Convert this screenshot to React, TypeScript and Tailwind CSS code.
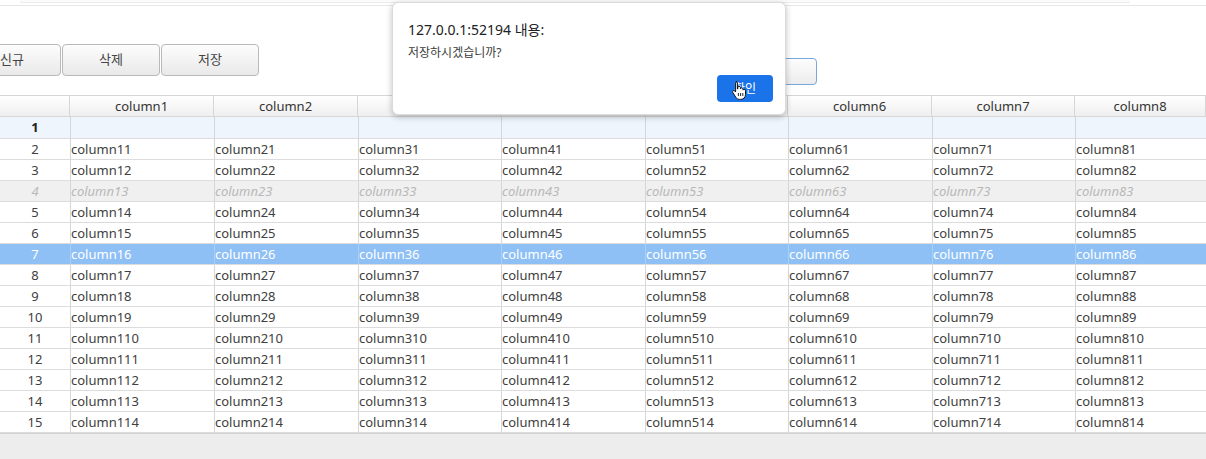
import React from "react";

const cols = [1, 2, 3, 4, 5, 6, 7, 8];
const grid =
  "grid grid-cols-[70px_144px_144px_143px_144px_143px_144px_143px_1fr]";

function Btn({ label }: { label: string }) {
  return (
    <div className="w-[98px] h-[32px] flex items-center justify-center rounded-[4px] border border-[#b9b9b9] bg-gradient-to-b from-[#fdfdfd] to-[#e9e9e9] text-[13px] text-[#444] shrink-0">
      {label}
    </div>
  );
}

function HandCursor() {
  return (
    <svg width="16" height="20" viewBox="0 0 16 20" className="absolute left-[731px] top-[80px]">
      <path
        d="M5 1.5c.8 0 1.4.6 1.4 1.4V9l.4-.1V7.6c0-.8.6-1.3 1.3-1.3s1.3.5 1.3 1.3v1.2c.2-.6.7-1 1.3-1 .8 0 1.3.6 1.3 1.3v1c.2-.4.7-.7 1.2-.7.8 0 1.3.6 1.3 1.3v3.8c0 2.8-2 4.9-4.8 4.9H8.6c-1.6 0-2.8-.7-3.7-2L1.8 12.6c-.4-.6-.3-1.4.3-1.8.6-.4 1.3-.3 1.8.2l.7.9V2.9c0-.8.6-1.4 1.4-1.4z"
        fill="#fff"
        stroke="#111"
        strokeWidth="1"
      />
      <path d="M7.4 13v3M9.6 13v3M11.8 13v3" stroke="#111" strokeWidth="0.9" />
    </svg>
  );
}

export default function App() {
  const rows = Array.from({ length: 15 }, (_, i) => i + 1);
  return (
    <div
      className="relative w-[1206px] h-[459px] overflow-hidden bg-white flex flex-col"
      style={{ fontFamily: '"Noto Sans", "Noto Sans CJK KR", sans-serif' }}
    >
      {/* top strip */}
      <div className="h-[6px] shrink-0 border-b border-[#e6e6e6] flex">
        <div className="ml-[20px] w-[1110px] h-[3px] border-b border-[#ececec] bg-[#fbfbfb]" />
      </div>

      {/* toolbar */}
      <div className="h-[89px] shrink-0 flex items-start pt-[38px]">
        <div className="flex gap-[1px] -ml-[37px]">
          <Btn label="신규" />
          <Btn label="삭제" />
          <Btn label="저장" />
        </div>
        <div className="ml-[460px] mt-[14px] w-[98px] h-[27px] rounded-[4px] border border-[#7aa7e0] bg-gradient-to-b from-[#fdfdfd] to-[#ececec]" />
      </div>

      {/* table */}
      <div className="flex flex-col text-[13px] text-[#404040] leading-none">
        <div className={`${grid} h-[22px] border-t border-b border-[#d6d6d6] bg-gradient-to-b from-[#ffffff] to-[#efefef]`}>
          <div className="border-r border-[#d6d6d6]" />
          {cols.map((c) => (
            <div key={c} className="flex items-center justify-center border-r border-[#d6d6d6] text-[#333]">
              column{c}
            </div>
          ))}
        </div>
        {rows.map((r) => {
          const first = r === 1;
          const disabled = r === 4;
          const sel = r === 7;
          const rowCls = sel
            ? "bg-[#8ec0f6] text-white"
            : disabled
            ? "bg-[#f0f0f0] text-[#b8b8b8] italic"
            : first
            ? "bg-[#eef5fd]"
            : "bg-white";
          return (
            <div
              key={r}
              className={`${grid} ${first ? "h-[22px]" : "h-[21px]"} border-b border-[#dcdcdc] ${rowCls}`}
            >
              <div className={`flex items-center justify-center ${first ? "font-bold text-[#222]" : ""}`}>
                {r}
              </div>
              {cols.map((c) => (
                <div
                  key={c}
                  className={`flex items-center border-l ${sel ? "border-[#a9cff7]" : "border-[#d6d6d6]"} whitespace-nowrap overflow-hidden`}
                >
                  {first ? "" : `column${c}${r - 1}`}
                </div>
              ))}
            </div>
          );
        })}
      </div>

      {/* bottom bar */}
      <div className="flex-1 bg-[#ededed] border-t border-[#d2d2d2]" />

      {/* dialog */}
      <div className="absolute left-[392px] top-[2px] w-[394px] h-[113px] bg-white rounded-[6px] border border-[#dadada] shadow-[0_2px_6px_rgba(0,0,0,0.25)]">
        <div className="absolute left-[15px] top-[16px] text-[14px] text-[#202124]">
          127.0.0.1:52194 내용:
        </div>
        <div className="absolute left-[15px] top-[41px] text-[12px] text-[#3c3c3c]">
          저장하시겠습니까?
        </div>
        <div className="absolute left-[324px] top-[72px] w-[56px] h-[27px] rounded-[4px] bg-[#1a73e8] text-white text-[12px] flex items-center justify-center">
          확인
        </div>
      </div>
      <HandCursor />
    </div>
  );
}
